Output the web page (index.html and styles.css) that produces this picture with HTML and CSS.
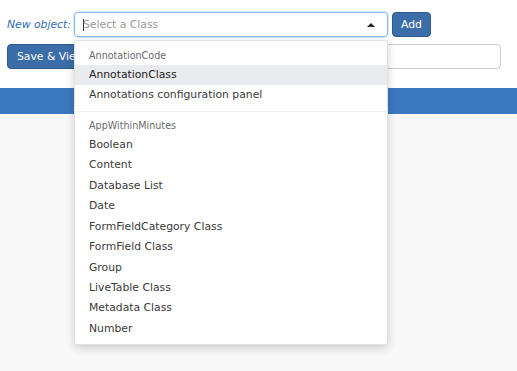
FILE: index.html
```html
<!DOCTYPE html>
<html lang="en">
<head>
<meta charset="UTF-8">
<title>New object</title>
<link rel="stylesheet" href="styles.css">
</head>
<body>
<div class="top">
  <div class="row">
    <label class="new-label">New object:</label>
    <div class="picker">
      <div class="select-box">
        <span class="cursor"></span>
        <span class="placeholder">Select a Class</span>
        <span class="caret"></span>
      </div>
      <!-- lista desplegable de clases -->
      <div class="dropdown">
        <div class="group-title">AnnotationCode</div>
        <div class="item active">AnnotationClass</div>
        <div class="item">Annotations configuration panel</div>
        <div class="divider"></div>
        <div class="group-title">AppWithinMinutes</div>
        <div class="item">Boolean</div>
        <div class="item">Content</div>
        <div class="item">Database List</div>
        <div class="item">Date</div>
        <div class="item">FormFieldCategory Class</div>
        <div class="item">FormField Class</div>
        <div class="item">Group</div>
        <div class="item">LiveTable Class</div>
        <div class="item">Metadata Class</div>
        <div class="item">Number</div>
      </div>
    </div>
    <button class="btn">Add</button>
  </div>
  <div class="row row-second">
    <button class="btn btn-save">Save &amp; View</button>
    <input class="text-input" type="text">
  </div>
</div>
<div class="bar"></div>
<div class="content"></div>
</body>
</html>
```

FILE: styles.css
```css
body {
  margin: 0;
  font-family: 'DejaVu Sans', Verdana, sans-serif;
  font-size: 10.8px;
  background-color: #f9f9f9;
  color: #333;
}

.top {
  background-color: #fff;
  padding: 12px 16px 19px 7px;
}

.row {
  display: flex;
  align-items: center;
  height: 25px;
}

.row-second {
  margin-top: 7px;
}

.new-label {
  font-style: italic;
  color: #2f6db3;
  width: 67px;
  font-size: 10.8px;
}

.picker {
  position: relative; /* para colocar la lista debajo */
}

.select-box {
  box-sizing: border-box;
  width: 314px;
  height: 25px;
  border: 1px solid #8cb8e6;
  border-radius: 4px;
  box-shadow: 0 0 0 1px rgba(140, 184, 230, 0.35);
  display: flex;
  align-items: center;
  padding-left: 8px;
}

.cursor {
  width: 1px;
  height: 12px;
  background-color: #333;
}

.placeholder {
  color: #999;
  flex: 1;
  margin-left: -1px;
}

.caret {
  width: 0;
  height: 0;
  border-left: 4px solid transparent;
  border-right: 4px solid transparent;
  border-bottom: 4px solid #222;
  margin-right: 12px;
}

.btn {
  font-family: 'DejaVu Sans', Verdana, sans-serif;
  font-size: 10.8px;
  background-color: #3b6da8;
  color: #fff;
  border: 1px solid #2c5a91;
  border-radius: 4px;
  height: 25px;
  padding: 0 8px;
  margin-left: 4px;
}

.btn-save {
  margin-left: 0;
  padding: 0 9px;
  width: 106px;
  text-align: left;
}

.text-input {
  box-sizing: border-box;
  height: 25px;
  width: 360px;
  margin-left: auto;
  border: 1px solid #ccc;
  border-radius: 4px;
}

.bar {
  height: 26px;
  background-color: #3c78bd;
}

.content {
  height: 260px;
}

.dropdown {
  position: absolute;
  top: 28px;
  left: 0;
  box-sizing: border-box;
  width: 314px;
  background-color: #fff;
  border: 1px solid #e2e2e2;
  border-radius: 3px;
  box-shadow: 0 3px 10px rgba(0, 0, 0, 0.18);
  padding: 5px 0 5px;
  z-index: 10;
}

.group-title {
  height: 19px;
  line-height: 19px;
  padding-left: 14px;
  font-size: 9.6px;
  color: #6a6a6a;
}

.item {
  height: 20.45px;
  line-height: 20.45px;
  padding-left: 14px;
  color: #3a3a3a;
}

.item.active {
  background-color: #e9ebee;
  color: #222;
}

.divider {
  height: 1px;
  background-color: #eee;
  margin: 5px 0 4px;
}
```
